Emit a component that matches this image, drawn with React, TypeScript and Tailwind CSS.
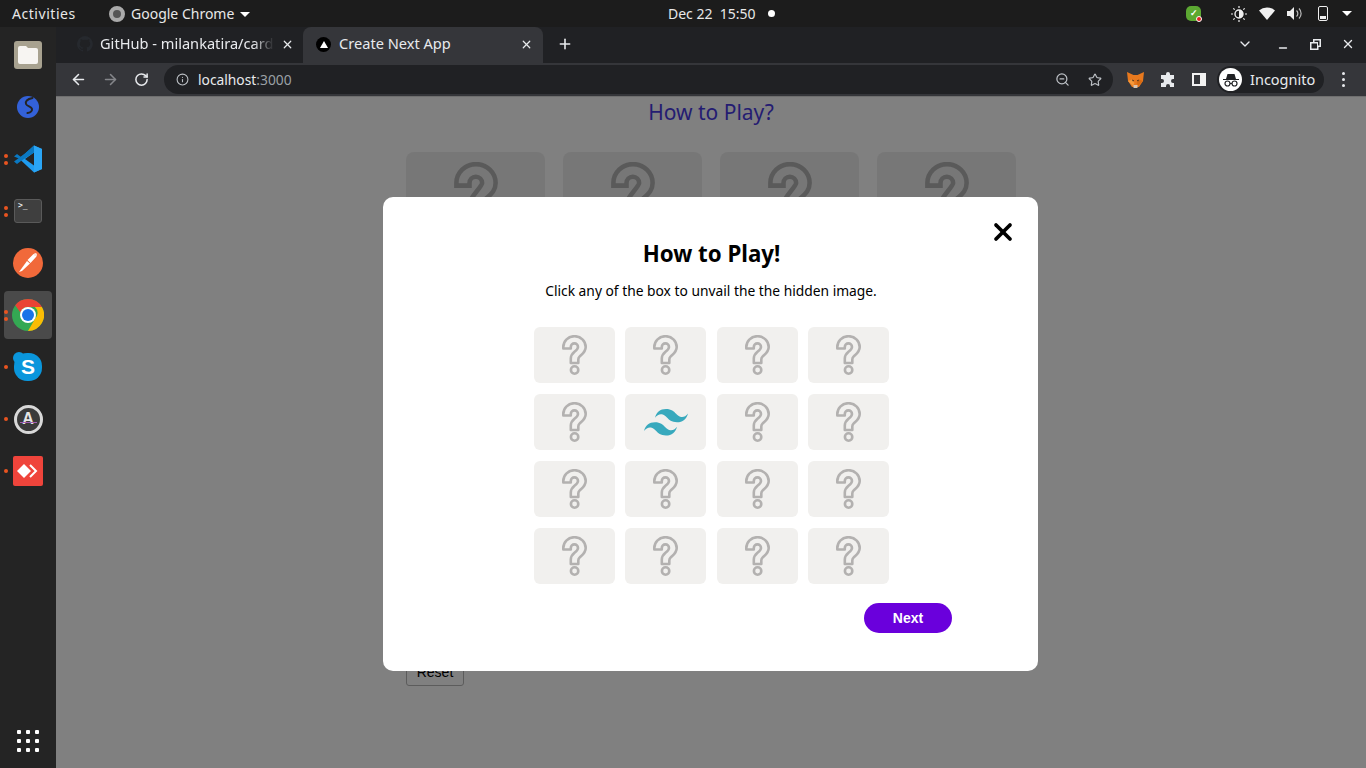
import { ArrowLeft, ArrowRight, Info, Minus, Plus, RotateCw, Star, X, ChevronDown, ZoomOut } from 'lucide-react';

const ui = "font-['Noto_Sans',sans-serif]";

function QuestionIcon({ color = '#b3b1b0' }: { color?: string }) {
  return (
    <svg width="25" height="40" viewBox="0 0 25 40" fill="none" stroke={color} strokeWidth="2.6" aria-hidden>
      <path d="M1.3 13.5V12A11.2 10.8 0 0 1 23.7 12C23.7 17 20.5 18.8 17.5 21.6C16.6 22.5 16.3 23.2 16.3 24.5V28H8.8V23.5C8.8 20.5 10.2 18.7 12.5 16.8C14.8 15 16 14 16 12A3.6 3.6 0 0 0 8.8 12V13.5Z" strokeLinejoin="round" />
      <circle cx="12.6" cy="35" r="3.7" />
    </svg>
  );
}

function TailwindIcon() {
  return (
    <svg width="44" height="27" viewBox="0 0 54 33" fill="#38a9bd" aria-hidden>
      <path d="M27 0c-7.2 0-11.7 3.6-13.5 10.8 2.7-3.6 5.85-4.95 9.45-4.05 2.054.514 3.522 2.004 5.147 3.653C30.744 13.09 33.808 16.2 40.5 16.2c7.2 0 11.7-3.6 13.5-10.8-2.7 3.6-5.85 4.95-9.45 4.05-2.054-.514-3.522-2.004-5.147-3.653C36.756 3.11 33.692 0 27 0zM13.5 16.2C6.3 16.2 1.8 19.8 0 27c2.7-3.6 5.85-4.95 9.45-4.05 2.054.514 3.522 2.004 5.147 3.653C17.244 29.29 20.308 32.4 27 32.4c7.2 0 11.7-3.6 13.5-10.8-2.7 3.6-5.85 4.95-9.45 4.05-2.054-.514-3.522-2.004-5.147-3.653C23.256 19.31 20.192 16.2 13.5 16.2z" />
    </svg>
  );
}

function ChromeLogo({ size = 32 }: { size?: number }) {
  return (
    <svg width={size} height={size} viewBox="0 0 32 32" aria-hidden>
      <circle cx="16" cy="16" r="16" fill="#34a853" />
      <path d="M16 0a16 16 0 0 1 13.9 8H16a8 8 0 0 0-7.6 5.5L3.2 6.3A16 16 0 0 1 16 0z" fill="#ea4335" />
      <path d="M29.9 8A16 16 0 0 1 16 32l6.9-12A8 8 0 0 0 22.9 8z" fill="#fbbc04" />
      <circle cx="16" cy="16" r="8" fill="#fff" />
      <circle cx="16" cy="16" r="6" fill="#1a73e8" />
    </svg>
  );
}

function DockItem({ dots = 0, active, children }: { dots?: number; active?: boolean; children: React.ReactNode }) {
  return (
    <div className="relative flex h-[52px] w-[56px] items-center justify-center">
      {active ? <div className="absolute left-1 top-0 h-12 w-12 rounded bg-[#4a4a4a]" /> : null}
      {dots > 0 ? (
        <div className="absolute left-[4px] top-0 flex h-12 flex-col justify-center gap-[3px]">
          {Array.from({ length: dots }).map((_, i) => (
            <span key={i} className="h-1 w-1 rounded-full bg-[#e95420]" />
          ))}
        </div>
      ) : null}
      <div className="relative -mt-1 flex items-center justify-center">{children}</div>
    </div>
  );
}

function Dock() {
  return (
    <aside className="flex w-14 shrink-0 flex-col items-center bg-[#242424] pt-1">
      <DockItem>
        <svg width="28" height="28" viewBox="0 0 28 28" aria-hidden>
          <rect width="28" height="28" rx="3" fill="#a8a290" />
          <path d="M4 7a2 2 0 0 1 2-2h6l2 2h8a2 2 0 0 1 2 2v12a2 2 0 0 1-2 2H6a2 2 0 0 1-2-2z" fill="#f7f5f2" />
        </svg>
      </DockItem>
      <DockItem>
        <svg width="22" height="22" viewBox="0 0 22 22" aria-hidden>
          <circle cx="11" cy="11" r="11" fill="#3361d8" />
          <path d="M15.500 2C10 3 8 5.500 9 8C10 10.500 14.500 10.500 15 13C15.300 15 13.500 16.500 10.500 17" fill="none" stroke="#242424" strokeWidth="2" strokeLinecap="round" />
        </svg>
      </DockItem>
      <DockItem dots={2}>
        <svg width="28" height="28" viewBox="0 0 28 28" aria-hidden>
          <path d="M20 0.500L5.500 14L20 27.500L28 24V4z" fill="#1f9cf0" />
          <path d="M20 7.500V20.500L11 14z" fill="#242424" />
          <path d="M20 0.500L7 12L3 9L0 11.500L6 14L20 7.500z" fill="#0a78c2" />
          <path d="M3 19L0 16.500L20 2V7.500L7 16z" fill="#0a78c2" />
          <path d="M20 0.500L28 4V24L20 27.500z" fill="#2aa5f5" />
        </svg>
      </DockItem>
      <DockItem dots={2}>
        <div className="h-6 w-7 rounded-[3px] border border-[#5a5a5a] bg-[#3f3f3f] pl-[3px] pt-[1px] font-['DejaVu_Sans_Mono',monospace] text-[8px] leading-[10px] text-white">
          &gt;_
        </div>
      </DockItem>
      <DockItem>
        <svg width="30" height="30" viewBox="0 0 30 30" aria-hidden>
          <circle cx="15" cy="15" r="15" fill="#f1693a" />
          <path d="M6 24L14 13L17 15.500L9 23z" fill="#fff" />
          <path d="M14.500 12L20 6.500A1.800 1.800 0 0 1 23 9L17.500 15z" fill="#fff" />
          <circle cx="22.500" cy="6.500" r="1.500" fill="#fde3d8" />
        </svg>
      </DockItem>
      <DockItem dots={2} active>
        <ChromeLogo />
      </DockItem>
      <DockItem dots={1}>
        <div className="relative flex h-[28px] w-[28px] items-center justify-center rounded-[13px] bg-[#0a96dc] font-['Liberation_Sans',sans-serif] text-[21px] font-bold text-white">
          <span className="absolute -left-[1px] -top-[1px] h-[12px] w-[12px] rounded-full bg-[#0a96dc]" />
          <span className="relative">S</span>
        </div>
      </DockItem>
      <DockItem dots={1}>
        <div className="relative flex h-[29px] w-[29px] items-center justify-center rounded-full border-[3px] border-[#d8d8d8] bg-[#3a3a3a] font-['Liberation_Sans',sans-serif] text-base font-bold text-[#e6e6e6]">
          A
          <span className="absolute left-[3px] right-[3px] top-[14px] h-[1px] bg-[#a060b0]" />
        </div>
      </DockItem>
      <DockItem dots={1}>
        <div className="flex h-[30px] w-[30px] items-center justify-center rounded-[2px] bg-[#ef443b]">
          <svg width="22" height="14" viewBox="0 0 22 14" aria-hidden>
            <path d="M7 0L14 7L7 14L0 7z" fill="#fff" />
            <path d="M13 1L19 7L13 13" fill="none" stroke="#fff" strokeWidth="2" />
          </svg>
        </div>
      </DockItem>
      <div className="mb-[16px] mt-auto grid grid-cols-3 gap-[5px]">
        {Array.from({ length: 9 }).map((_, i) => (
          <span key={i} className="h-1 w-1 rounded-[1px] bg-white" />
        ))}
      </div>
    </aside>
  );
}

function TopBar() {
  return (
    <header className={`${ui} relative flex h-[27px] shrink-0 items-center bg-[#1c1c1c] text-sm text-[#e8e8e8]`}>
      <span className="ml-3 w-[97px] tracking-[0.55px]">Activities</span>
      <div className="h-4 w-4 rounded-full border-[4px] border-[#aaa] bg-[#555]" />
      <span className="ml-[6px]">Google Chrome</span>
      <span className="ml-[6px] mt-[1px] h-0 w-0 border-x-[5px] border-t-[5px] border-x-transparent border-t-white" />
      <div className="absolute left-[668px] top-0 flex h-[27px] items-center">
        <span>Dec 22&nbsp; 15:50</span>
        <span className="ml-3 h-[7px] w-[7px] rounded-full bg-white" />
      </div>
      <div className="ml-auto mr-[14px] flex items-center">
        <div className="relative mr-[30px] flex h-[15px] w-[15px] items-center justify-center rounded-[5px] bg-[#5ca832] text-[9px] font-bold text-white">
          ✓
          <span className="absolute -bottom-[1px] -right-[1px] h-[6px] w-[6px] rounded-full border border-white bg-[#e02020]" />
        </div>
        <svg width="16" height="16" viewBox="0 0 16 16" className="mr-[12px]" aria-hidden>
          <circle cx="8" cy="8" r="4" fill="none" stroke="#eee" strokeWidth="1.4" />
          <path d="M8 4a4 4 0 0 1 0 8z" fill="#eee" />
          <path d="M8 0v2M8 14v2M0 8h2M14 8h2M2.3 2.3l1.4 1.4M12.3 12.3l1.4 1.4M2.3 13.7l1.4-1.4M12.3 3.7l1.4-1.4" stroke="#eee" strokeWidth="1.2" />
        </svg>
        <svg width="16" height="13" viewBox="0 0 16 13" className="mr-[12px]" aria-hidden>
          <path d="M0 3.5A12 12 0 0 1 16 3.5L8 13z" fill="#f2f2f2" />
        </svg>
        <svg width="15" height="13" viewBox="0 0 15 13" className="mr-[16px]" aria-hidden>
          <path d="M0 4h3l4-4v13l-4-4H0z" fill="#eee" />
          <path d="M9.5 3.5a4 4 0 0 1 0 6M12 1.5a7 7 0 0 1 0 10" fill="none" stroke="#bbb" strokeWidth="1.2" />
        </svg>
        <div className="mr-[14px] flex h-[15px] w-[10px] flex-col justify-end rounded-[2px] border border-[#eee] p-[1px]">
          <div className="h-[3px] bg-[#eee]" />
        </div>
        <span className="h-0 w-0 border-x-[5px] border-t-[5px] border-x-transparent border-t-white" />
      </div>
    </header>
  );
}

function TabStrip() {
  return (
    <div className={`${ui} flex h-9 shrink-0 items-end bg-[#202124] text-[14.6px] text-[#e8eaed]`}>
      <div className="flex h-9 w-[247px] shrink-0 items-center pb-[2px] pl-[21px] pr-[9px]">
        <svg width="16" height="16" viewBox="0 0 16 16" fill="#26292e" aria-hidden>
          <path d="M8 0a8 8 0 0 0-2.5 15.6c.4.1.5-.2.5-.4v-1.4c-2.2.5-2.7-1-2.7-1-.4-.9-.9-1.200-.9-1.200-.7-.5.1-.5.1-.5.8.1 1.200.8 1.200.8.7 1.200 1.900.9 2.300.7.1-.5.3-.9.5-1.100-1.800-.2-3.600-.9-3.600-4 0-.9.3-1.600.8-2.100-.1-.2-.4-1 .1-2.100 0 0 .7-.2 2.200.8a7.600 7.600 0 0 1 4 0c1.500-1 2.200-.8 2.200-.8.4 1.100.2 1.900.1 2.100.5.6.8 1.300.8 2.100 0 3.100-1.900 3.700-3.700 3.900.3.3.6.800.6 1.500v2.200c0 .2.100.5.600.4A8 8 0 0 0 8 0z" />
        </svg>
        <span className="ml-[7px] w-[174px] overflow-hidden whitespace-nowrap [mask-image:linear-gradient(90deg,#000_88%,transparent)]">
          GitHub - milankatira/card
        </span>
        <X size={13} strokeWidth={2.2} className="ml-auto shrink-0" />
      </div>
      <div className="flex h-9 w-[240px] shrink-0 items-center rounded-t-lg bg-[#35363a] pb-[2px] pl-[13px] pr-[10px]">
        <span className="flex h-[15px] w-[15px] items-center justify-center rounded-full bg-black">
          <span className="h-0 w-0 border-x-[4px] border-b-[7px] border-x-transparent border-b-white" />
        </span>
        <span className="ml-[8px]">Create Next App</span>
        <X size={13} strokeWidth={2.2} className="ml-auto" />
      </div>
      <div className="flex h-9 w-11 items-center justify-center pb-[2px]">
        <Plus size={16} strokeWidth={2.4} />
      </div>
      <div className="ml-auto flex h-9 items-center pb-[2px] pr-[11px] text-[#e8eaed]">
        <ChevronDown size={16} strokeWidth={2} className="mr-[24px]" />
        <Minus size={12} strokeWidth={2.6} className="mr-[21px] mt-[7px]" />
        <svg width="11" height="11" viewBox="0 0 11 11" className="mr-[20px]" aria-hidden>
          <path d="M3 0h8v8H8.500v3H0V3h3zM4.500 1.500V3H8v3.500h1.500v-5zM1.500 4.500v5H7v-5z" fill="#e8eaed" />
        </svg>
        <X size={14} strokeWidth={2.4} />
      </div>
    </div>
  );
}

function Toolbar() {
  return (
    <div className={`${ui} flex h-[33px] shrink-0 items-center bg-[#35363a] pl-[14px] text-[14px] text-[#e8eaed]`}>
      <ArrowLeft size={17} strokeWidth={2.2} />
      <ArrowRight size={17} strokeWidth={2.2} className="ml-[15px] text-[#85868a]" />
      <RotateCw size={15} strokeWidth={2.4} className="ml-[15px]" />
      <div className="ml-[15px] flex h-[29px] w-[949px] items-center rounded-full bg-[#202124] pl-[12px] pr-[10px]">
        <Info size={13} strokeWidth={2} className="text-[#bdc1c6]" />
        <span className="ml-[9px] mt-[1px] text-[13.8px]">localhost</span>
        <span className="mt-[1px] text-[13.8px] text-[#9aa0a6]">:3000</span>
        <ZoomOut size={15} strokeWidth={2} className="ml-auto text-[#bdc1c6]" />
        <Star size={14} strokeWidth={2} className="ml-[18px] mr-[1px] text-[#bdc1c6]" />
      </div>
      <svg width="17" height="16" viewBox="0 0 17 16" className="ml-[14px]" aria-hidden>
        <path d="M0 0L6.500 3H10.500L17 0L16 9L12 15H5L1 9z" fill="#e8791e" />
        <path d="M1 9L5 7.500L7.500 11L6 14z" fill="#f59a3c" />
        <path d="M16 9L12 7.500L9.500 11L11 14z" fill="#d76a12" />
        <path d="M5 7.500L7 8.500L6 9.500z" fill="#1d1d1d" />
        <path d="M12 7.500L10 8.500L11 9.500z" fill="#1d1d1d" />
        <path d="M6.500 13h4v3h-4z" fill="#d9c6b4" />
      </svg>
      <svg width="16" height="16" viewBox="0 0 16 16" className="ml-[16px]" fill="#e8eaed" aria-hidden>
        <path d="M6 2a2 2 0 0 1 4 0v1h4v4h-1a2 2 0 0 0 0 4h1v4h-4v-1a2 2 0 0 0-4 0v1H1v-4h1a2 2 0 0 0 0-4H1V3h5z" />
      </svg>
      <div className="ml-[16px] flex h-[13px] w-[14px] justify-end border-2 border-[#f2f2f2]">
        <div className="h-full w-[4px] bg-[#f2f2f2]" />
      </div>
      <div className="ml-[11px] flex h-[27px] w-[107px] items-center rounded-full bg-[#202124] pl-[2px]">
        <span className="flex h-[23px] w-[23px] items-center justify-center rounded-full bg-white">
          <svg width="16" height="14" viewBox="0 0 16 14" aria-hidden>
            <path d="M3 6L4.500 1H11.500L13 6H16V7H0V6z" fill="#202124" />
            <circle cx="4.500" cy="10.500" r="2.500" fill="none" stroke="#202124" strokeWidth="1.200" />
            <circle cx="11.500" cy="10.500" r="2.500" fill="none" stroke="#202124" strokeWidth="1.200" />
            <path d="M7 10.500h2" stroke="#202124" strokeWidth="1.200" />
          </svg>
        </span>
        <span className="ml-[8px] text-[14.5px]">Incognito</span>
      </div>
      <div className="ml-[18px] flex flex-col gap-[3px]">
        <span className="h-[3px] w-[3px] rounded-full bg-[#e8eaed]" />
        <span className="h-[3px] w-[3px] rounded-full bg-[#e8eaed]" />
        <span className="h-[3px] w-[3px] rounded-full bg-[#e8eaed]" />
      </div>
    </div>
  );
}

function ModalBoard() {
  return (
    <div className="grid w-[354.7px] grid-cols-4 gap-x-[10.5px] gap-y-[11px]">
      {Array.from({ length: 16 }).map((_, i) => (
        <div key={i} className="flex h-[56px] items-center justify-center rounded-md bg-[#f1f0ee]">
          {i === 5 ? <TailwindIcon /> : <QuestionIcon />}
        </div>
      ))}
    </div>
  );
}

function Page() {
  return (
    <main className={`${ui} relative flex min-h-0 flex-1 flex-col items-center border-t border-[#6f6f6f] bg-[#808080]`}>
      <h2 className="mt-[1px] text-[21px] leading-[28px] text-[#241c72]">How to Play?</h2>
      <div className="mt-[26px] grid w-[610px] grid-cols-4 gap-[18px]">
        {Array.from({ length: 16 }).map((_, i) => (
          <div key={i} className="flex h-[111px] justify-center rounded-lg bg-[#777777] pt-[10px]">
            <svg width="44" height="70" viewBox="0 0 25 40" fill="none" stroke="#5a5a5a" strokeWidth="2.600" aria-hidden>
              <path d="M1.300 13.500V12A11.200 10.800 0 0 1 23.700 12C23.700 17 20.500 18.800 17.500 21.600V28H8.800V23.500C8.800 20.500 16 14 16 12A3.600 3.600 0 0 0 8.800 12V13.500Z" />
            </svg>
          </div>
        ))}
      </div>
      <div className="mt-[9px] w-[610px]">
        <button className="h-[26px] w-[58px] rounded-[3px] border border-[#5c5c5c] font-['Liberation_Sans',sans-serif] text-[14px] text-black">
          Reset
        </button>
      </div>

      <div className="absolute left-[327px] top-[100px] flex h-[474px] w-[655px] flex-col items-center rounded-[10px] bg-white pt-[41px] text-black">
        <X size={28} strokeWidth={3.200} className="absolute right-[21px] top-[21px]" />
        <h1 className="ml-[2px] text-[22.3px] font-bold leading-8">How to Play!</h1>
        <p className="ml-[1px] mt-[11px] text-[13.8px] leading-5">Click any of the box to unvail the the hidden image.</p>
        <div className="mt-[26px] w-full pl-[151.2px]">
          <ModalBoard />
        </div>
        <div className="mt-[19px] flex w-full justify-end pr-[86px]">
          <button className="h-[30px] w-[88px] rounded-full bg-[#6a00dc] font-['Liberation_Sans',sans-serif] text-[14px] font-bold text-white">
            Next
          </button>
        </div>
      </div>
    </main>
  );
}

export default function App() {
  return (
    <div className="flex h-screen w-screen flex-col overflow-hidden bg-[#808080]">
      <TopBar />
      <div className="flex min-h-0 flex-1">
        <Dock />
        <div className="flex min-w-0 flex-1 flex-col">
          <TabStrip />
          <Toolbar />
          <Page />
        </div>
      </div>
    </div>
  );
}
